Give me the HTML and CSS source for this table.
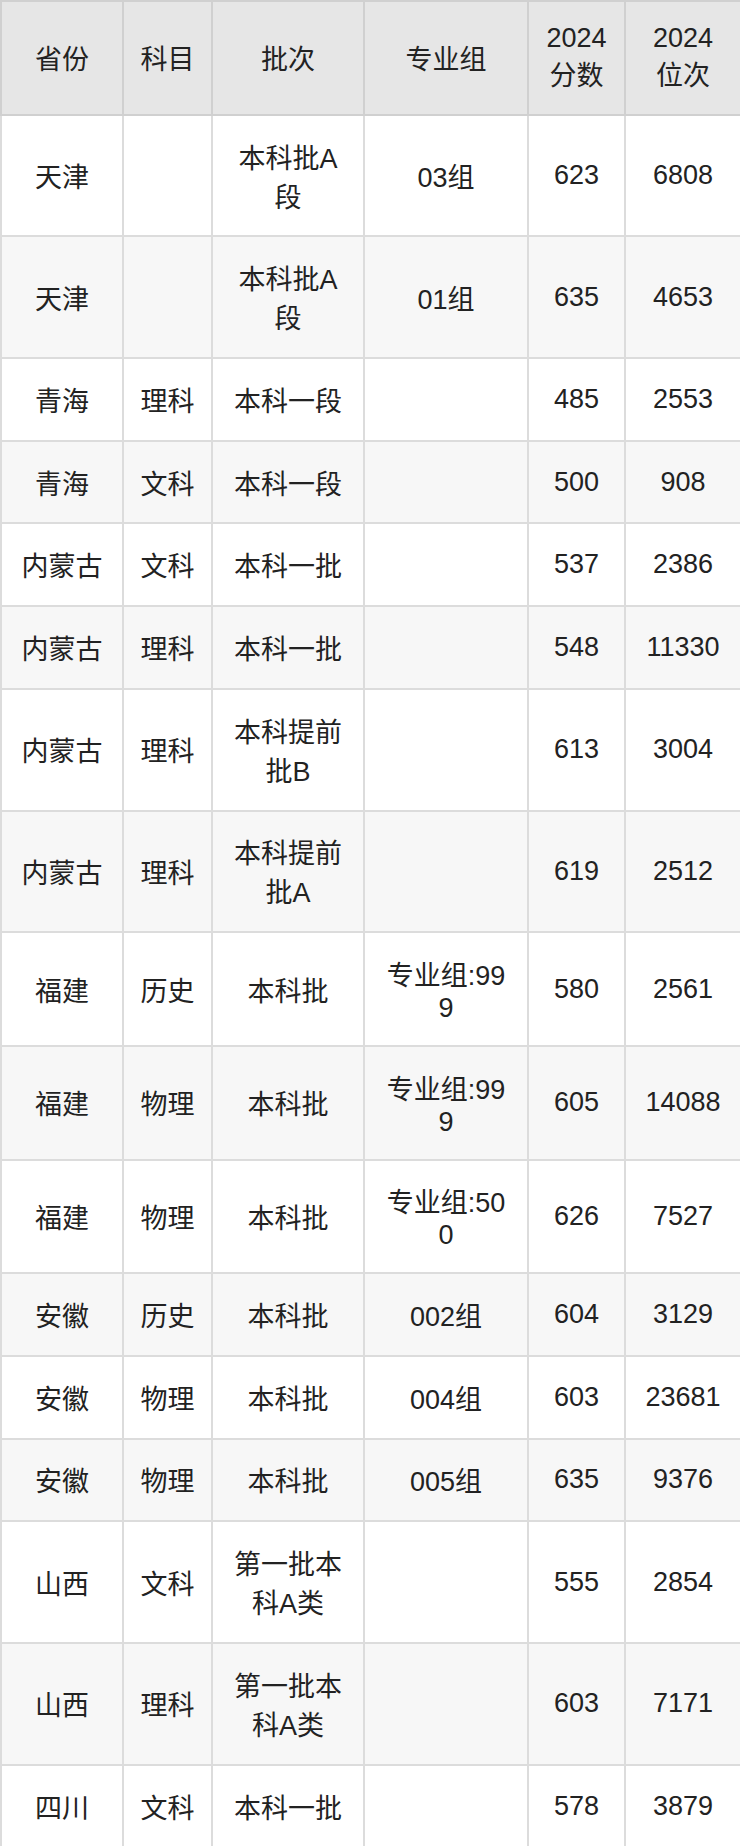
FILE: index.html
```html
<!DOCTYPE html>
<html lang="zh">
<head>
<meta charset="utf-8">
<link rel="stylesheet" href="styles.css">
</head>
<body>
<table class="score-table">
<colgroup>
<col class="c1"><col class="c2"><col class="c3"><col class="c4"><col class="c5"><col class="c6">
</colgroup>
<thead>
<tr><th>省份</th><th>科目</th><th>批次</th><th>专业组</th><th>2024<br>分数</th><th>2024<br>位次</th></tr>
</thead>
<tbody>
<tr><td>天津</td><td></td><td>本科批A段</td><td>03组</td><td>623</td><td>6808</td></tr>
<tr><td>天津</td><td></td><td>本科批A段</td><td>01组</td><td>635</td><td>4653</td></tr>
<tr><td>青海</td><td>理科</td><td>本科一段</td><td></td><td>485</td><td>2553</td></tr>
<tr><td>青海</td><td>文科</td><td>本科一段</td><td></td><td>500</td><td>908</td></tr>
<tr><td>内蒙古</td><td>文科</td><td>本科一批</td><td></td><td>537</td><td>2386</td></tr>
<tr><td>内蒙古</td><td>理科</td><td>本科一批</td><td></td><td>548</td><td>11330</td></tr>
<tr><td>内蒙古</td><td>理科</td><td>本科提前批B</td><td></td><td>613</td><td>3004</td></tr>
<tr><td>内蒙古</td><td>理科</td><td>本科提前批A</td><td></td><td>619</td><td>2512</td></tr>
<tr><td>福建</td><td>历史</td><td>本科批</td><td>专业组:999</td><td>580</td><td>2561</td></tr>
<tr><td>福建</td><td>物理</td><td>本科批</td><td>专业组:999</td><td>605</td><td>14088</td></tr>
<tr><td>福建</td><td>物理</td><td>本科批</td><td>专业组:500</td><td>626</td><td>7527</td></tr>
<tr><td>安徽</td><td>历史</td><td>本科批</td><td>002组</td><td>604</td><td>3129</td></tr>
<tr><td>安徽</td><td>物理</td><td>本科批</td><td>004组</td><td>603</td><td>23681</td></tr>
<tr><td>安徽</td><td>物理</td><td>本科批</td><td>005组</td><td>635</td><td>9376</td></tr>
<tr><td>山西</td><td>文科</td><td>第一批本科A类</td><td></td><td>555</td><td>2854</td></tr>
<tr><td>山西</td><td>理科</td><td>第一批本科A类</td><td></td><td>603</td><td>7171</td></tr>
<tr><td>四川</td><td>文科</td><td>本科一批</td><td></td><td>578</td><td>3879</td></tr>
</tbody>
</table>
</body>
</html>
```
FILE: styles.css
```css
html, body {
  margin: 0;
  padding: 0;
  background: #fff;
}
.score-table {
  width: 740px;
  border-collapse: collapse;
  table-layout: fixed;
  font-family: "Liberation Sans", "Noto Sans CJK SC", sans-serif;
  font-size: 27px;
  line-height: normal;
  color: #222;
}
.c1 { width: 122px; }
.c2 { width: 89px; }
.c3 { width: 152px; }
.c4 { width: 164px; }
.c5 { width: 97px; }
.c6 { width: 116px; }
.score-table th,
.score-table td {
  border: 2px solid #dcdcdc;
  text-align: center;
  vertical-align: middle;
  padding: 20.85px 8px;
  word-break: break-all;
  font-weight: normal;
}
.score-table td:nth-child(3),
.score-table td:nth-child(4) {
  padding-left: 18px;
  padding-right: 18px;
}
.score-table th {
  background: #e6e6e6;
  border-color: #d0d0d0;
}
.score-table tbody tr:nth-child(even) td {
  background: #f7f7f7;
}
```
